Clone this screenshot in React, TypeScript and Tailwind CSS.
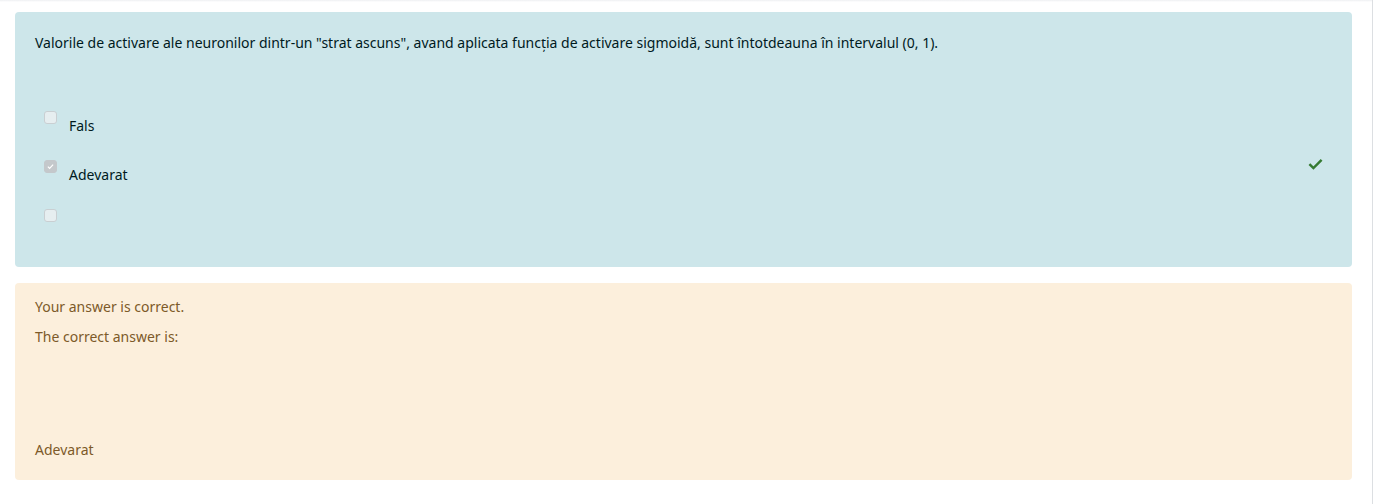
import React from 'react';

function Box({ checked }: { checked?: boolean }) {
  return (
    <span
      className={
        'flex h-[13px] w-[13px] shrink-0 items-center justify-center rounded-[3px] border ' +
        (checked ? 'border-[#c4c8cb] bg-[#c4c8cb]' : 'border-[#c9cfd2] bg-[#e6eef0]')
      }
    >
      {checked && (
        <svg viewBox="0 0 12 12" className="h-[9px] w-[9px]">
          <path d="M2.5 6.2l2.3 2.3 4.7-5" fill="none" stroke="#fff" strokeWidth="1.6" />
        </svg>
      )}
    </span>
  );
}

function Choice({ label, checked }: { label?: string; checked?: boolean }) {
  return (
    <div className="flex h-[49px] items-start pl-[9px]">
      <Box checked={checked} />
      {label && <span className="ml-[12px] mt-[4px] leading-[22px]">{label}</span>}
    </div>
  );
}

export default function App() {
  return (
    <div className="min-h-[504px] w-[1373px] border-r border-[#dcdfe2] bg-white font-['Noto_Sans',sans-serif] text-[14px]">
      <div className="h-[2px] bg-gradient-to-b from-[#eef0f2] to-white" />
      <div className="pl-[15px] pr-[20px] pt-[10px]">
        <div className="relative h-[255px] rounded-[4px] bg-[#cde6ea] px-[20px] pt-[20px] text-[#001a1e]">
          <p className="leading-[22px]">
            Valorile de activare ale neuronilor dintr-un "strat ascuns", avand aplicata funcția de activare sigmoidă, sunt întotdeauna în intervalul (0, 1).
          </p>
          <div className="mt-[57px]">
            <Choice label="Fals" />
            <Choice label="Adevarat" checked />
            <Choice />
          </div>
          <svg
            viewBox="0 0 16 12"
            className="absolute left-[1293px] top-[146px] h-[12px] w-[15px]"
          >
            <path d="M1.5 6.2l4.3 4.2 8.7-8.8" fill="none" stroke="#357a32" strokeWidth="2.6" />
          </svg>
        </div>
        <div className="mt-[16px] h-[197px] rounded-[4px] bg-[#fcefdc] px-[20px] pt-[13px] text-[#7d5a29]">
          <p className="leading-[22px]">Your answer is correct.</p>
          <p className="mt-[8px] leading-[22px]">The correct answer is:</p>
          <p className="mt-[91px] leading-[22px]">Adevarat</p>
        </div>
      </div>
    </div>
  );
}
